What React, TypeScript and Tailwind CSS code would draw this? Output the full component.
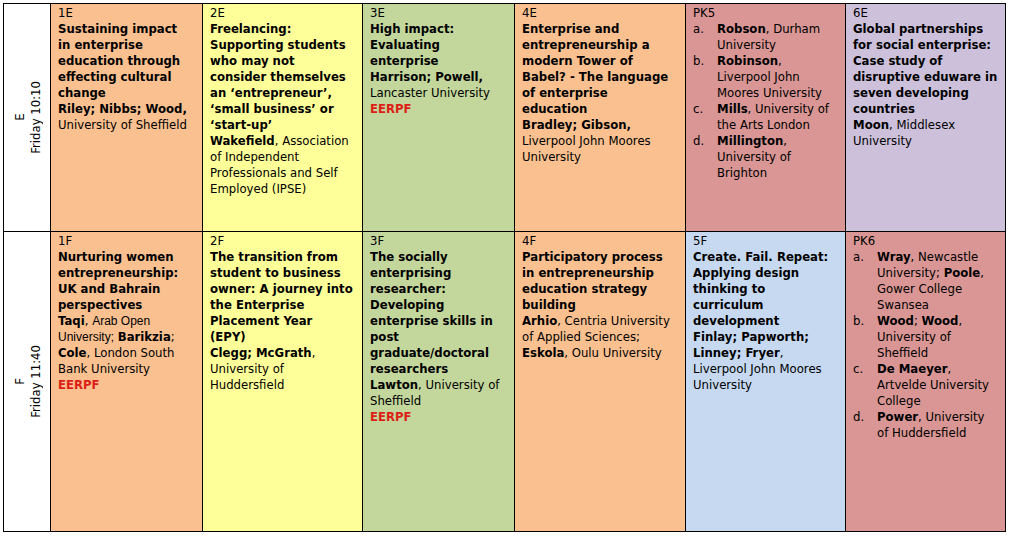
import type { ReactNode } from 'react';

const B = ({ children }: { children: ReactNode }) => <span className="font-bold">{children}</span>;

const Eerpf = () => <span className="font-bold text-[#dc1e16]">EERPF</span>;

function Slot({ bg, children }: { bg: string; children: ReactNode }) {
  return (
    <div className={`border-r border-b border-black pl-[7px] pr-1 pt-px whitespace-nowrap ${bg}`}>
      {children}
    </div>
  );
}

function Label({ code, time }: { code: string; time: string }) {
  return (
    <div className="border-r border-b border-black bg-white flex items-center justify-center pl-[2px]">
      <div className="[writing-mode:vertical-rl] rotate-180 text-center">
        {code}
        <br />
        {time}
      </div>
    </div>
  );
}

function Item({ mark, children }: { mark: string; children: ReactNode }) {
  return (
    <div className="flex">
      <span className="w-6 shrink-0">{mark}</span>
      <div>{children}</div>
    </div>
  );
}

export default function App() {
  return (
    <div className="w-[1010px] h-[536px] bg-white pt-[3px] pl-[3px] font-['DejaVu_Sans',sans-serif] text-[11.7px] leading-4 text-black">
      <div className="grid grid-cols-[47px_152px_160px_152px_171px_160px_160px] grid-rows-[228px_300px] w-[1003px] border-l border-t border-black">
        <Label code="E" time="Friday 10:10" />
        <Slot bg="bg-[#fac090]">
          1E
          <br />
          <B>
            Sustaining impact
            <br />
            in enterprise
            <br />
            education through
            <br />
            effecting cultural
            <br />
            change
            <br />
            Riley; Nibbs; Wood,
          </B>
          <br />
          University of Sheffield
        </Slot>
        <Slot bg="bg-[#ffff99]">
          2E
          <br />
          <B>
            Freelancing:
            <br />
            Supporting students
            <br />
            who may not
            <br />
            consider themselves
            <br />
            an ‘entrepreneur’,
            <br />
            ‘small business’ or
            <br />
            ‘start-up’
            <br />
            Wakefield
          </B>
          , Association
          <br />
          of Independent
          <br />
          Professionals and Self
          <br />
          Employed (IPSE)
        </Slot>
        <Slot bg="bg-[#c3d69b]">
          3E
          <br />
          <B>
            High impact:
            <br />
            Evaluating
            <br />
            enterprise
            <br />
            Harrison; Powell,
          </B>
          <br />
          Lancaster University
          <br />
          <Eerpf />
        </Slot>
        <Slot bg="bg-[#fac090]">
          4E
          <br />
          <B>
            Enterprise and
            <br />
            entrepreneurship a
            <br />
            modern Tower of
            <br />
            Babel? - The language
            <br />
            of enterprise
            <br />
            education
            <br />
            Bradley; Gibson,
          </B>
          <br />
          Liverpool John Moores
          <br />
          University
        </Slot>
        <Slot bg="bg-[#d99694]">
          PK5
          <Item mark="a.">
            <B>Robson</B>, Durham
            <br />
            University
          </Item>
          <Item mark="b.">
            <B>Robinson</B>,
            <br />
            Liverpool John
            <br />
            Moores University
          </Item>
          <Item mark="c.">
            <B>Mills</B>, University of
            <br />
            the Arts London
          </Item>
          <Item mark="d.">
            <B>Millington</B>,
            <br />
            University of
            <br />
            Brighton
          </Item>
        </Slot>
        <Slot bg="bg-[#ccc0da]">
          6E
          <br />
          <B>
            Global partnerships
            <br />
            for social enterprise:
            <br />
            Case study of
            <br />
            disruptive eduware in
            <br />
            seven developing
            <br />
            countries
            <br />
            Moon
          </B>
          , Middlesex
          <br />
          University
        </Slot>

        <Label code="F" time="Friday 11:40" />
        <Slot bg="bg-[#fac090]">
          1F
          <br />
          <B>
            Nurturing women
            <br />
            entrepreneurship:
            <br />
            UK and Bahrain
            <br />
            perspectives
            <br />
            Taqi
          </B>
          , <span className="font-['Liberation_Sans',sans-serif] text-[12px]">Arab Open</span>
          <br />
          <span className="font-['Liberation_Sans',sans-serif] text-[12px]">University;</span> <B>Barikzia</B>;
          <br />
          <B>Cole</B>, London South
          <br />
          Bank University
          <br />
          <Eerpf />
        </Slot>
        <Slot bg="bg-[#ffff99]">
          2F
          <br />
          <B>
            The transition from
            <br />
            student to business
            <br />
            owner: A journey into
            <br />
            the Enterprise
            <br />
            Placement Year
            <br />
            (EPY)
            <br />
            Clegg; McGrath
          </B>
          ,
          <br />
          University of
          <br />
          Huddersfield
        </Slot>
        <Slot bg="bg-[#c3d69b]">
          3F
          <br />
          <B>
            The socially
            <br />
            enterprising
            <br />
            researcher:
            <br />
            Developing
            <br />
            enterprise skills in
            <br />
            post
            <br />
            graduate/doctoral
            <br />
            researchers
            <br />
            Lawton
          </B>
          , University of
          <br />
          Sheffield
          <br />
          <Eerpf />
        </Slot>
        <Slot bg="bg-[#fac090]">
          4F
          <br />
          <B>
            Participatory process
            <br />
            in entrepreneurship
            <br />
            education strategy
            <br />
            building
            <br />
            Arhio
          </B>
          , Centria University
          <br />
          of Applied Sciences;
          <br />
          <B>Eskola</B>, Oulu University
        </Slot>
        <Slot bg="bg-[#c6d9f1]">
          5F
          <br />
          <B>
            Create. Fail. Repeat:
            <br />
            Applying design
            <br />
            thinking to
            <br />
            curriculum
            <br />
            development
            <br />
            Finlay; Papworth;
            <br />
            Linney; Fryer
          </B>
          ,
          <br />
          Liverpool John Moores
          <br />
          University
        </Slot>
        <Slot bg="bg-[#d99694]">
          PK6
          <Item mark="a.">
            <B>Wray</B>, Newcastle
            <br />
            University; <B>Poole</B>,
            <br />
            Gower College
            <br />
            Swansea
          </Item>
          <Item mark="b.">
            <B>Wood</B>; <B>Wood</B>,
            <br />
            University of
            <br />
            Sheffield
          </Item>
          <Item mark="c.">
            <B>De Maeyer</B>,
            <br />
            Artvelde University
            <br />
            College
          </Item>
          <Item mark="d.">
            <B>Power</B>, University
            <br />
            of Huddersfield
          </Item>
        </Slot>
      </div>
    </div>
  );
}
